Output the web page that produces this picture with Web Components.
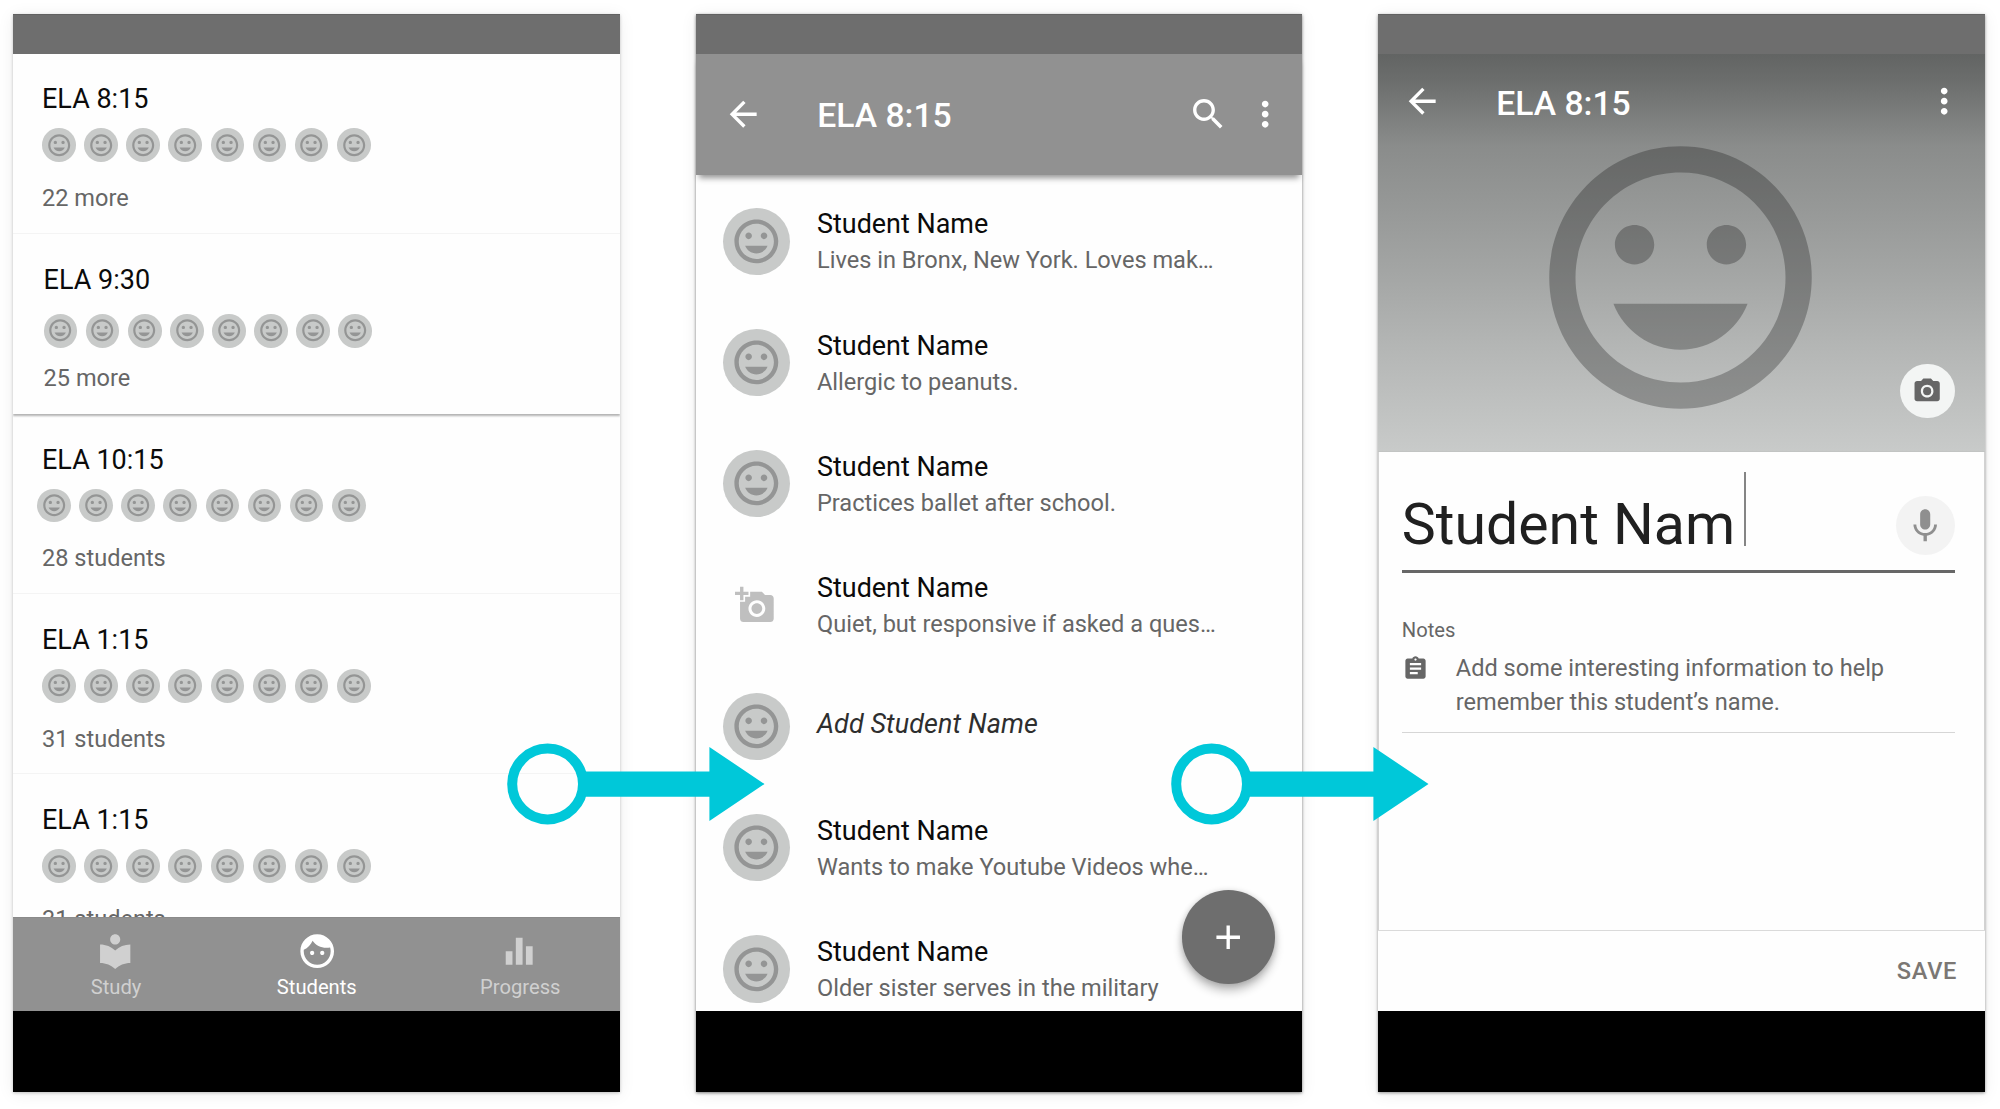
<!DOCTYPE html>
<html lang="en">
<head>
<meta charset="utf-8">
<title>Student name flow</title>
<style>
html,body{margin:0;padding:0;background:#fff}
body{width:2000px;height:1109px;overflow:hidden;font-family:Roboto,"Liberation Sans",sans-serif;color:#0b0b0b}
</style>
</head>
<body>
<flow-board></flow-board>
<script>
const ICONS = {
  mood:'<path d="M11.99 2C6.47 2 2 6.48 2 12s4.47 10 9.99 10C17.52 22 22 17.52 22 12S17.52 2 11.99 2zM12 20c-4.42 0-8-3.58-8-8s3.58-8 8-8 8 3.58 8 8-3.58 8-8 8zm3.5-9c.83 0 1.5-.67 1.5-1.5S16.33 8 15.5 8 14 8.67 14 9.5s.67 1.5 1.5 1.5zm-7 0c.83 0 1.5-.67 1.5-1.5S9.33 8 8.5 8 7 8.67 7 9.5 7.67 11 8.5 11zm3.5 6.5c2.33 0 4.31-1.46 5.11-3.5H6.89c.8 2.04 2.78 3.5 5.11 3.5z"/>',
  library:'<path d="M12 11.55C9.64 9.35 6.48 8 3 8v11c3.48 0 6.64 1.35 9 3.55 2.36-2.19 5.52-3.55 9-3.55V8c-3.48 0-6.64 1.35-9 3.55zM12 8c1.66 0 3-1.34 3-3s-1.34-3-3-3-3 1.34-3 3 1.34 3 3 3z"/>',
  face:'<path d="M9 11.75c-.69 0-1.25.56-1.25 1.25s.56 1.25 1.25 1.25 1.25-.56 1.25-1.25-.56-1.25-1.25-1.25zm6 0c-.69 0-1.25.56-1.25 1.25s.56 1.25 1.25 1.25 1.25-.56 1.25-1.25-.56-1.25-1.25-1.25zM12 2C6.48 2 2 6.48 2 12s4.48 10 10 10 10-4.48 10-10S17.52 2 12 2zm0 18c-4.41 0-8-3.59-8-8 0-.29.02-.58.05-.86 2.36-1.05 4.23-2.98 5.21-5.37C11.07 8.33 14.05 10 17.42 10c.78 0 1.53-.09 2.25-.26.21.71.33 1.47.33 2.26 0 4.41-3.59 8-8 8z"/>',
  bars:'<path d="M10 20h4V4h-4v16zm-6 0h4v-8H4v8zM16 9v11h4V9h-4z"/>',
  back:'<path d="M20 11H7.83l5.59-5.59L12 4l-8 8 8 8 1.41-1.41L7.83 13H20v-2z"/>',
  search:'<path d="M15.5 14h-.79l-.28-.27C15.41 12.59 16 11.11 16 9.5 16 5.91 13.09 3 9.5 3S3 5.91 3 9.5 5.91 16 9.5 16c1.61 0 3.09-.59 4.23-1.57l.27.28v.79l5 4.99L20.49 19l-4.99-5zm-6 0C7.01 14 5 11.99 5 9.5S7.01 5 9.5 5 14 7.01 14 9.5 11.99 14 9.5 14z"/>',
  more:'<path d="M12 8c1.1 0 2-.9 2-2s-.9-2-2-2-2 .9-2 2 .9 2 2 2zm0 2c-1.1 0-2 .9-2 2s.9 2 2 2 2-.9 2-2-.9-2-2-2zm0 6c-1.1 0-2 .9-2 2s.9 2 2 2 2-.9 2-2-.9-2-2-2z"/>',
  addphoto:'<path d="M3 4V1h2v3h3v2H5v3H3V6H0V4h3zm3 6V7h3V4h7l1.83 2H21c1.1 0 2 .9 2 2v12c0 1.1-.9 2-2 2H5c-1.1 0-2-.9-2-2V10h3zm7 9c2.76 0 5-2.24 5-5s-2.24-5-5-5-5 2.24-5 5 2.24 5 5 5zm-3.2-5c0 1.77 1.43 3.2 3.2 3.2s3.2-1.43 3.2-3.2-1.43-3.2-3.2-3.2-3.2 1.43-3.2 3.2z"/>',
  camera:'<circle cx="12" cy="12" r="3.2"/><path d="M9 2L7.17 4H4c-1.1 0-2 .9-2 2v12c0 1.1.9 2 2 2h16c1.1 0 2-.9 2-2V6c0-1.1-.9-2-2-2h-3.17L15 2H9zm3 15c-2.76 0-5-2.24-5-5s2.24-5 5-5 5 2.24 5 5-2.24 5-5 5z"/>',
  mic:'<path d="M12 14c1.66 0 2.99-1.34 2.99-3L15 5c0-1.66-1.34-3-3-3S9 3.34 9 5v6c0 1.66 1.34 3 3 3zm5.3-3c0 3-2.54 5.1-5.3 5.1S6.7 14 6.7 11H5c0 3.41 2.72 6.23 6 6.72V21h2v-3.28c3.28-.48 6-3.3 6-6.72h-1.7z"/>',
  notes:'<path d="M19 3h-4.18C14.4 1.84 13.3 1 12 1c-1.3 0-2.4.84-2.82 2H5c-1.1 0-2 .9-2 2v14c0 1.1.9 2 2 2h14c1.1 0 2-.9 2-2V5c0-1.1-.9-2-2-2zm-7 0c.55 0 1 .45 1 1s-.45 1-1 1-1-.45-1-1 .45-1 1-1zm2 14H7v-2h7v2zm3-4H7v-2h10v2zm0-4H7V7h10v2z"/>',
  plus:'<path d="M19 13h-6v6h-2v-6H5v-2h6V5h2v6h6v2z"/>'
};

function define(name, css, html) {
  customElements.define(name, class extends HTMLElement {
    connectedCallback() {
      if (this.shadowRoot) return;
      const root = this.attachShadow({mode: 'open'});
      const body = typeof html === 'function' ? html(this) : html;
      root.innerHTML = `<style>:host{box-sizing:border-box}*{box-sizing:border-box}${css}</style>${body}`;
    }
  });
}

define('md-icon',
  `:host{display:block;flex:none;width:var(--size,40.4px);height:var(--size,40.4px)}
   svg{display:block;width:100%;height:100%;fill:currentColor}`,
  el => `<svg viewBox="0 0 24 24">${ICONS[el.getAttribute('name')]}</svg>`);

define('student-avatar',
  `:host{display:flex;flex:none;align-items:center;justify-content:center;width:var(--avatar,33.7px);height:var(--avatar,33.7px);border-radius:50%;background:#c8cac9}
   md-icon{--size:calc(var(--avatar,33.7px)*.784);color:rgba(0,0,0,.26)}`,
  `<md-icon name="mood"></md-icon>`);

define('phone-frame',
  `:host{display:flex;flex-direction:column;flex:none;width:606.8px;height:1078.5px;background:#fefefe;box-shadow:0 1px 3px rgba(0,0,0,var(--edge,.22)),0 2px 16px rgba(0,0,0,.07)}
   .status{height:40.3px;flex:none;background:#6e6e6e;border-top:1px solid #626262;position:relative;z-index:1}
   main{flex:1;min-height:0;display:flex;flex-direction:column;position:relative}
   .system{height:81px;flex:none;background:#000}`,
  `<div class="status"></div><main><slot></slot></main><div class="system"></div>`);

define('class-card',
  `:host{display:flex;flex-direction:column;flex:none;height:180.15px;padding:27.6px 0 0 29px;border-bottom:1px solid #f4f4f4}
   :host([raised]){box-shadow:0 1.5px 2px rgba(0,0,0,.3);border-bottom-color:#fefefe}
   .title{font-size:27px;line-height:36px}
   .faces{display:flex;gap:8.45px;margin:11px 0 21px var(--nudge,0)}
   :host([raised]) .faces{margin-top:16.3px;margin-bottom:15.8px}
   .count{font-size:23.55px;line-height:30px;color:#666}`,
  `<div class="title"><slot name="title"></slot></div><div class="faces">${'<student-avatar></student-avatar>'.repeat(8)}</div><div class="count"><slot></slot></div>`);

define('nav-item',
  `:host{display:flex;flex-direction:column;align-items:center;flex:1;padding-top:13px;color:#d0d0d0}
   :host([active]){color:#fff}
   span{font-size:20.2px;line-height:26px;margin:3.2px 0 0 var(--nudge,0)}`,
  el => `<md-icon name="${el.getAttribute('icon')}"></md-icon><span><slot></slot></span>`);

define('bottom-nav',
  `:host{display:flex;flex:none;height:94.4px;padding-left:.8px;background:#919191;position:relative;border-top:1px solid #8a8a8a}`,
  `<slot></slot>`);

define('class-list',
  `:host{display:block;flex:1;min-height:0;overflow:hidden}`, `<slot></slot>`);

define('tool-bar',
  `:host{display:flex;flex:none;align-items:center;height:121.2px;padding:0 16.8px 0 27.2px;color:#fff}
   .title{flex:1;font-size:33.7px;font-weight:500;line-height:40px;margin-left:54px;padding-top:var(--drop,2.6px)}
   .actions{display:flex;gap:16.8px}
   md-icon,.actions{margin-top:var(--lift,.6px)}`,
  `<md-icon name="back"></md-icon><div class="title"><slot></slot></div><div class="actions"><slot name="actions"></slot></div>`);

define('student-row',
  `:host{display:flex;align-items:center;height:121.3px;padding-left:27.2px;--avatar:67.2px}
   .lead{width:67.2px;display:flex;justify-content:center;flex:none}
   md-icon{color:#bfbfbf;margin-left:-2px}
   .text{margin:0 0 .6px 27px}
   .name{font-size:26.95px;line-height:36px}
   :host([placeholder]) .name{font-style:italic;color:#2e2e2e;margin-bottom:3.4px;letter-spacing:.1px}
   .desc{font-size:23.58px;line-height:30px;color:#666;margin-top:3px;white-space:nowrap}
   :host([placeholder]) .desc{display:none}`,
  el => `<div class="lead">${el.hasAttribute('photo') ? '<md-icon name="addphoto"></md-icon>' : '<student-avatar></student-avatar>'}</div>
   <div class="text"><div class="name"><slot name="name">Student Name</slot></div><div class="desc"><slot></slot></div></div>`);

define('student-list',
  `:host{display:block;flex:1;min-height:0;overflow:hidden;padding-top:5.5px}`, `<slot></slot>`);

define('round-button',
  `:host{display:flex;align-items:center;justify-content:center;flex:none;border-radius:50%;width:var(--d);height:var(--d)}`,
  el => `<md-icon name="${el.getAttribute('icon')}"></md-icon>`);

define('photo-header',
  `:host{display:flex;flex-direction:column;align-items:center;flex:none;height:398px;position:relative;overflow:hidden;border-bottom:1px solid #c2c4c3;
     background:linear-gradient(180deg,#626463 0,#6c6e6d 7%,#8a8c8b 23%,#989a99 41%,#a5a7a6 57%,#b4b6b5 74%,#c8cac9 100%)}
   tool-bar{align-self:stretch;height:94.4px;padding:0 20.5px 0 23.6px;--drop:5.6px;--lift:0px}
   .face{--size:315px;color:rgba(0,0,0,.26);margin:-28.3px 1.8px 0 0}
   round-button{position:absolute;right:30.4px;bottom:32.6px;--d:54.2px;--size:30.3px;background:#f3f5f4;color:#666}`,
  `<tool-bar><slot></slot><md-icon slot="actions" name="more"></md-icon></tool-bar>
   <md-icon class="face" name="mood"></md-icon><round-button icon="camera"></round-button>`);

define('name-form',
  `:host{display:flex;flex-direction:column;flex:1;padding:30px 29.4px 0 22.6px;border:solid #d2d2d2;border-width:0 1.2px}
   .field{display:flex;align-items:center;height:91px;border-bottom:3.4px solid #676767}
   .value{width:342.4px;font-size:57.2px;line-height:68px;color:#202020;white-space:nowrap;margin-bottom:1px}
   .caret{width:1.6px;height:74px;background:#858585;align-self:flex-start;margin-top:-9.5px}
   round-button{margin-left:auto;--d:59px;background:#f3f3f3;color:#8f8f8f}
   .label{font-size:20.2px;line-height:26px;color:#666;margin-top:44.5px}
   .note{display:flex;color:#666;padding-bottom:12.6px;margin-top:8.8px;border-bottom:1.5px solid #d6d6d6}
   .note md-icon{--size:27px;margin-top:3px}
   .note div{font-size:23.58px;line-height:33.4px;margin-left:27px}`,
  `<div class="field"><div class="value"><slot name="value"></slot></div><div class="caret"></div><round-button icon="mic"></round-button></div>
   <div class="label"><slot name="label"></slot></div>
   <div class="note"><md-icon name="notes"></md-icon><div><slot></slot></div></div>`);

define('action-bar',
  `:host{display:flex;flex:none;align-items:center;justify-content:flex-end;height:81px;padding:0 27.8px 0 0;border-top:1.5px solid #dadada;color:#7b7774;font-size:23.6px;font-weight:500;letter-spacing:.75px}`,
  `<slot></slot>`);

define('flow-arrow',
  `:host{display:block;position:absolute;width:258px;height:82px}svg{display:block}`,
  `<svg width="258" height="82" viewBox="0 0 258 82"><circle cx="40.6" cy="41" r="35.4" fill="none" stroke="#00c8d9" stroke-width="10"/><path d="M78 28.6H202.4V4L257.5 41L202.4 78V53.8H78z" fill="#00c8d9"/></svg>`);

define('flow-board',
  `:host{display:block}
   .board{display:flex;gap:75.8px;padding:13.5px 0 0 13px;position:relative}
   .fab{position:absolute;z-index:2;right:27.3px;bottom:27.5px;--d:93.5px;background:#6e6e6e;color:#fff;box-shadow:0 7px 10px rgba(0,0,0,.24),0 1px 6px rgba(0,0,0,.18)}
   .bar{background:#919191;box-shadow:0 6px 6px -3px rgba(0,0,0,.42);position:relative}
   .first{left:506.9px;top:742.5px}
   .second{left:1170.9px;top:742.5px}`,
  `<div class="board">
    <phone-frame>
      <class-list>
        <class-card><span slot="title">ELA 8:15</span>22 more</class-card>
        <class-card raised style="padding-left:30.6px"><span slot="title">ELA 9:30</span>25 more</class-card>
        <class-card style="--nudge:-5px"><span slot="title">ELA 10:15</span>28 students</class-card>
        <class-card><span slot="title">ELA 1:15</span>31 students</class-card>
        <class-card><span slot="title">ELA 1:15</span>31 students</class-card>
      </class-list>
      <bottom-nav>
        <nav-item icon="library" style="--nudge:2.6px">Study</nav-item>
        <nav-item icon="face" active>Students</nav-item>
        <nav-item icon="bars" style="--nudge:3px">Progress</nav-item>
      </bottom-nav>
    </phone-frame>
    <phone-frame style="--edge:.5">
      <tool-bar class="bar">ELA 8:15<md-icon slot="actions" name="search"></md-icon><md-icon slot="actions" name="more"></md-icon></tool-bar>
      <student-list>
        <student-row>Lives in Bronx, New York. Loves mak…</student-row>
        <student-row>Allergic to peanuts.</student-row>
        <student-row>Practices ballet after school.</student-row>
        <student-row photo>Quiet, but responsive if asked a ques…</student-row>
        <student-row placeholder><span slot="name">Add Student Name</span></student-row>
        <student-row>Wants to make Youtube Videos whe…</student-row>
        <student-row>Older sister serves in the military</student-row>
      </student-list>
      <round-button class="fab" icon="plus"></round-button>
    </phone-frame>
    <phone-frame style="--edge:.4">
      <photo-header>ELA 8:15</photo-header>
      <name-form><span slot="value">Student Nam</span><span slot="label">Notes</span>Add some interesting information to help<br>remember this student’s name.</name-form>
      <action-bar>SAVE</action-bar>
    </phone-frame>
    <flow-arrow class="first"></flow-arrow>
    <flow-arrow class="second"></flow-arrow>
  </div>`);
</script>
</body>
</html>
